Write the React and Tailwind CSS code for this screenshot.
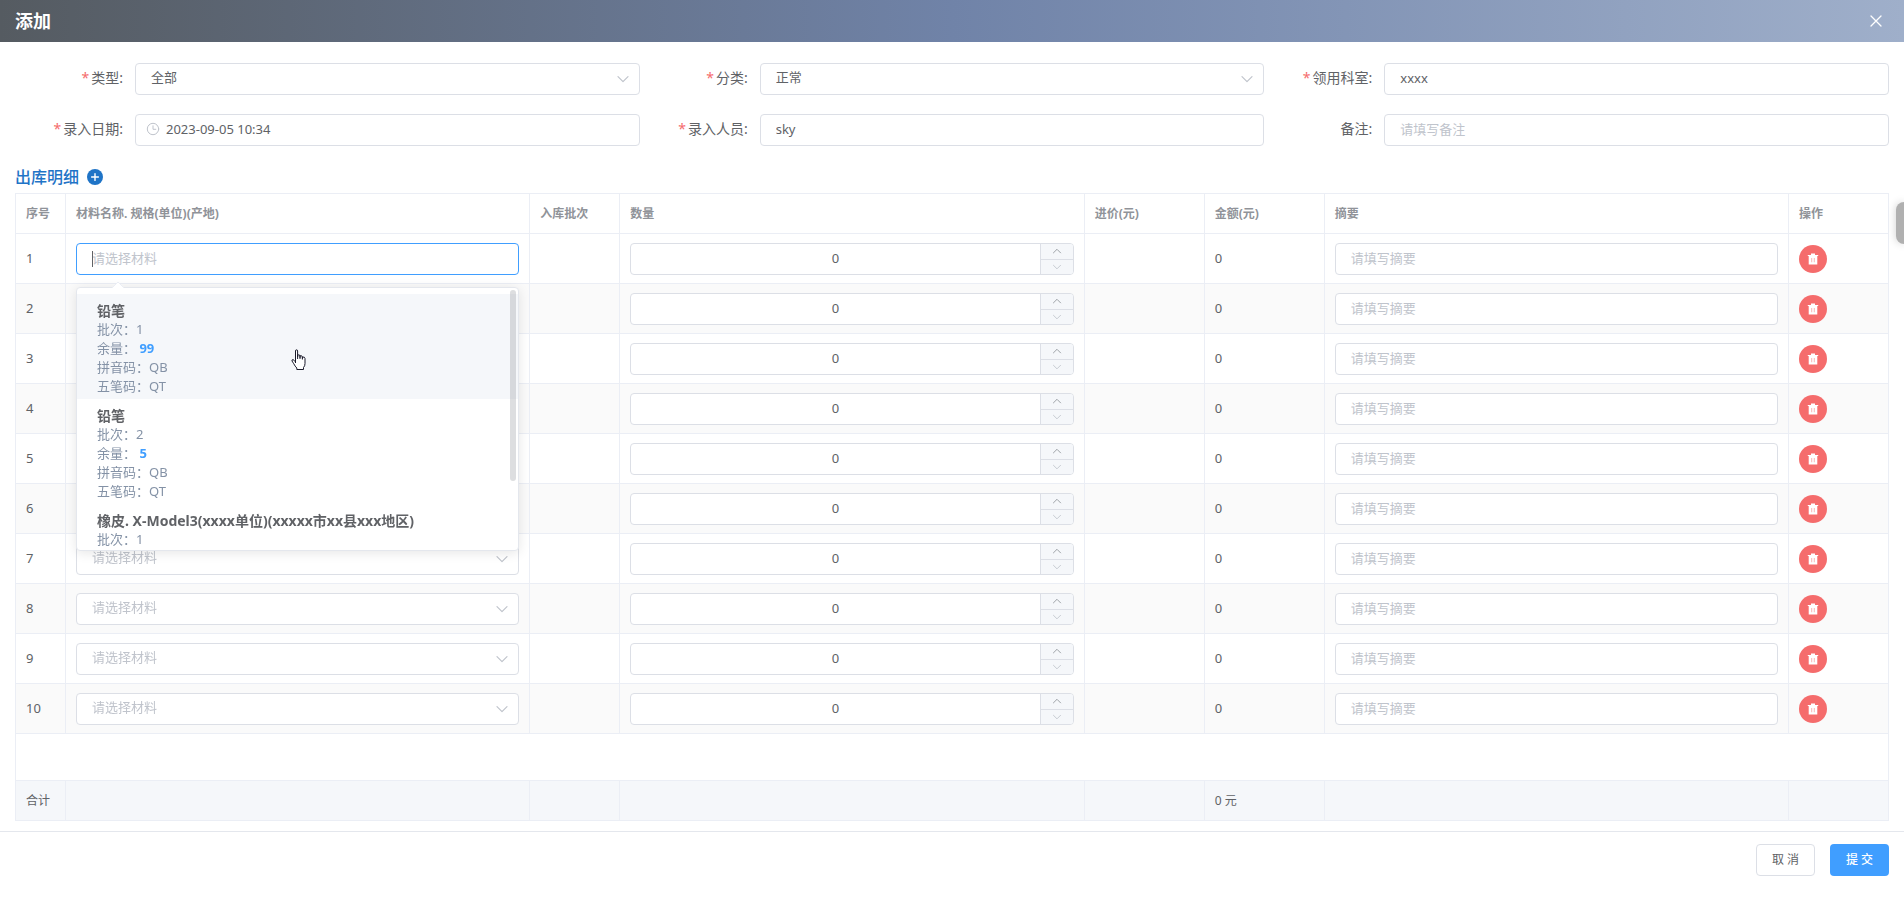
import React, { useState } from 'react';

const LABEL = 'w-[120px] shrink-0 pb-0.5 pr-3 text-right text-sm text-[#606266]';
const INPUT =
  'h-8 w-full rounded border border-[#dcdfe6] bg-white px-[15px] pb-0.5 text-[13px] text-[#606266] placeholder:text-[#c0c4cc] outline-none focus:border-[#409eff]';

const materials = [
  { name: '铅笔', batch: 1, stock: 99, pinyin: 'QB', wubi: 'QT' },
  { name: '铅笔', batch: 2, stock: 5, pinyin: 'QB', wubi: 'QT' },
  { name: '橡皮. X-Model3(xxxx单位)(xxxxx市xx县xxx地区)', batch: 1 },
];

const columns = [
  { title: '序号', width: 'w-[50px]' },
  { title: '材料名称. 规格(单位)(产地)', width: '' },
  { title: '入库批次', width: 'w-[90px]' },
  { title: '数量', width: '' },
  { title: '进价(元)', width: 'w-[120px]' },
  { title: '金额(元)', width: 'w-[120px]' },
  { title: '摘要', width: '' },
  { title: '操作', width: 'w-[100px]' },
];

const Chevron = ({ className, up }) => (
  <svg viewBox="0 0 14 14" className={className} fill="none" stroke="currentColor" strokeWidth="1.2" strokeLinecap="round" strokeLinejoin="round">
    <path d={up ? 'M2 9.6 L7 4.6 L12 9.6' : 'M2 4.6 L7 9.6 L12 4.6'} />
  </svg>
);

const ClockIcon = () => (
  <svg viewBox="0 0 14 14" className="w-3.5 h-3.5" fill="none" stroke="currentColor" strokeLinecap="round">
    <circle cx="7" cy="7" r="5.7" />
    <path d="M7 3.8 V7.3 H9.8" />
  </svg>
);

const TrashIcon = () => (
  <svg viewBox="0 0 12 12" className="w-3 h-3" fill="currentColor" fillRule="evenodd">
    <path d="M4 0.5 H8 V2 H11.2 V3 H0.8 V2 H4 Z M1.7 3 H10.3 V11.5 H1.7 Z M4.6 5 V9.3 H5.1 V5 Z M6.9 5 V9.3 H7.4 V5 Z" />
  </svg>
);

const PlusIcon = () => (
  <svg viewBox="0 0 16 16" className="w-4 h-4">
    <circle cx="8" cy="8" r="8" fill="currentColor" />
    <path d="M8 4.6 V11.4 M4.6 8 H11.4" stroke="#fff" strokeWidth="1.4" strokeLinecap="round" />
  </svg>
);

const HandCursor = () => (
  <svg viewBox="0 0 16 22" className="w-4 h-[22px]" fill="#fff" stroke="#1a1a2a" strokeLinejoin="round">
    <path d="M4.5 14 V2 Q4.5 0.8 5.5 0.8 Q6.6 0.8 6.6 2 V8 V6 Q8.9 5.3 9 7 V8.5 V6.8 Q11.2 6.2 11.4 8 V9.3 V8 Q13.8 7.6 14 9.5 V14.5 Q14 17 12.5 18.5 V20.5 H5.8 V19 Q4 17.3 2.8 14.8 L1 12 Q0.6 10.6 2 10.6 Q3 10.8 4.5 13 Z" />
    <path d="M6.6 7 V10 M9 8 V10 M11.4 9 V10.5" fill="none" />
  </svg>
);

const Field = ({ id, label, required, children }) => (
  <div className="flex items-center">
    <label htmlFor={id} className={LABEL}>
      {required && <span className="mr-0.5 text-[#f56c6c]">*</span>}
      {label}:
    </label>
    <div className="relative flex-1">{children}</div>
  </div>
);

const SelectBox = ({ id, label, options, placeholder }) => (
  <div className="relative">
    <select
      id={id}
      aria-label={label}
      defaultValue={placeholder ? '' : options[0]}
      className={`${INPUT} appearance-none block ${placeholder ? 'text-[#c0c4cc]' : ''}`}
    >
      {placeholder && <option value="">{placeholder}</option>}
      {options.map((o, i) => (
        <option key={i}>{o}</option>
      ))}
    </select>
    <Chevron className="absolute right-2.5 top-[9px] w-3.5 h-3.5 text-[#c0c4cc] pointer-events-none" />
  </div>
);

const MaterialDropdown = () => (
  <div className="absolute left-0 right-0 top-11 z-20 rounded border border-[#e4e7ed] bg-white shadow-[0_2px_12px_rgba(0,0,0,0.1)]">
    <svg viewBox="0 0 12 6" className="absolute left-[35px] -top-1.5 w-3 h-1.5">
      <path d="M0 6 L6 0 L12 6" fill="#fff" stroke="#ebeef5" />
    </svg>
    <ul role="listbox" className="h-[262px] overflow-hidden pt-1.5">
      {materials.map((m, i) => (
        <li key={i} role="option" aria-selected={i === 0} className={`px-5 pb-[3px] pt-[7px] text-[13px] leading-[19px] text-[#8492a6] ${i === 0 ? 'bg-[#f5f7fa]' : ''}`}>
          <div className="text-sm leading-[19px] font-bold text-[#606266] whitespace-nowrap">{m.name}</div>
          <div>批次：{m.batch}</div>
          {m.stock && <div>余量： <b className="text-[#409eff]">{m.stock}</b></div>}
          {m.pinyin && <div>拼音码：{m.pinyin}</div>}
          {m.wubi && <div>五笔码：{m.wubi}</div>}
        </li>
      ))}
    </ul>
    <div className="absolute right-0.5 top-0.5 h-[191px] w-1.5 rounded-full bg-[#909399]/30" />
    <div className="absolute left-[214px] top-[61px]">
      <HandCursor />
    </div>
  </div>
);

const Quantity = ({ row }) => {
  const [value, setValue] = useState(0);
  return (
    <div className="flex h-8 overflow-hidden rounded border border-[#dcdfe6] bg-white">
      <input
        aria-label={`数量 ${row}`}
        value={value}
        onChange={(e) => setValue(Number(e.target.value) || 0)}
        className="min-w-0 flex-1 text-center text-[13px] text-[#606266] outline-none"
      />
      <div className="flex w-[33px] flex-col border-l border-[#dcdfe6] bg-[#f5f7fa]">
        <button aria-label="增加" onClick={() => setValue(value + 1)} className="flex h-4 items-center justify-center border-b border-[#dcdfe6] text-[#909399]">
          <Chevron up className="w-2.5 h-2.5" />
        </button>
        <button aria-label="减少" onClick={() => setValue(Math.max(0, value - 1))} className="flex flex-1 items-center justify-center text-[#c0c4cc]">
          <Chevron className="w-2.5 h-2.5" />
        </button>
      </div>
    </div>
  );
};

const DetailTable = () => {
  const rows = Array.from({ length: 10 }, (_, i) => i + 1);
  const cell = 'border-r border-b border-[#ebeef5] px-2.5 text-left';

  return (
    <table className="w-full table-fixed border-separate border-spacing-0 border-l border-t border-[#ebeef5] text-xs text-[#606266]">
      <thead>
        <tr className="h-10 text-[#909399]">
          {columns.map((c) => (
            <th key={c.title} className={`${cell} ${c.width} font-bold`}>{c.title}</th>
          ))}
        </tr>
      </thead>
      <tbody>
        {rows.map((n) => (
          <tr key={n} className="h-[50px] even:bg-[#fafafa]">
            <td className={`${cell} text-[13px]`}>{n}</td>
            <td className={cell}>
              {n === 1 ? (
                <div className="relative">
                  <input autoFocus aria-label="材料 1" placeholder="请选择材料" className={`${INPUT} block caret-transparent`} />
                  <span className="absolute left-4 top-2 h-4 w-px bg-[#606266]" />
                  <MaterialDropdown />
                </div>
              ) : (
                <SelectBox label={`材料 ${n}`} placeholder="请选择材料" options={materials.map((m) => m.name)} />
              )}
            </td>
            <td className={cell}></td>
            <td className={cell}><Quantity row={n} /></td>
            <td className={cell}></td>
            <td className={`${cell} text-[13px]`}>0</td>
            <td className={cell}>
              <input aria-label={`摘要 ${n}`} placeholder="请填写摘要" className={`${INPUT} block`} />
            </td>
            <td className={cell}>
              <button aria-label="删除" className="flex h-7 w-7 items-center justify-center rounded-full bg-[#f56c6c] text-white">
                <TrashIcon />
              </button>
            </td>
          </tr>
        ))}
        <tr className="h-[47px]">
          <td colSpan={8} className={cell}></td>
        </tr>
      </tbody>
      <tfoot>
        <tr className="h-10 bg-[#f5f7fa]">
          {columns.map((c, i) => (
            <td key={c.title} className={cell}>{i === 0 ? '合计' : i === 5 ? '0 元' : ''}</td>
          ))}
        </tr>
      </tfoot>
    </table>
  );
};

const App = () => {
  return (
    <div className="relative min-h-screen overflow-hidden bg-white font-['Noto_Sans','Noto_Sans_CJK_SC',sans-serif]">
      <header className="flex h-[42px] items-center justify-between bg-linear-to-r from-[#555b61] via-[#7083a8] to-[#9fafca] px-[15px] text-white">
        <h1 className="text-lg font-bold">添加</h1>
        <button aria-label="关闭" className="mr-[5px]">
          <svg viewBox="0 0 16 16" className="w-4 h-4" stroke="currentColor" strokeWidth="1.3" strokeLinecap="round">
            <path d="M3 3 L13 13 M13 3 L3 13" />
          </svg>
        </button>
      </header>

      <main className="px-[15px] pb-2.5 pt-[21px]">
        <div className="grid grid-cols-3 gap-y-[19px]">
          <Field id="type" label="类型" required>
            <SelectBox id="type" options={['全部']} />
          </Field>
          <Field id="category" label="分类" required>
            <SelectBox id="category" options={['正常']} />
          </Field>
          <Field id="dept" label="领用科室" required>
            <input id="dept" defaultValue="xxxx" className={`${INPUT} block`} />
          </Field>
          <Field id="date" label="录入日期" required>
            <span className="absolute left-[11px] top-2 text-[#c0c4cc]"><ClockIcon /></span>
            <input id="date" defaultValue="2023-09-05 10:34" className={`${INPUT} block !pl-[30px]`} />
          </Field>
          <Field id="operator" label="录入人员" required>
            <input id="operator" defaultValue="sky" className={`${INPUT} block`} />
          </Field>
          <Field id="remark" label="备注">
            <input id="remark" placeholder="请填写备注" className={`${INPUT} block`} />
          </Field>
        </div>

        <div className="mb-1 mt-[19px] flex h-6 items-center gap-2 text-[#1f74c7]">
          <h2 className="text-base font-medium">出库明细</h2>
          <button aria-label="新增明细"><PlusIcon /></button>
        </div>

        <DetailTable />
      </main>

      <footer className="flex justify-end gap-[15px] border-t border-[#e4e7ed] px-[15px] py-3 text-xs">
        <button className="h-8 w-[59px] rounded-sm border border-[#dcdfe6] bg-white text-[#606266]">取 消</button>
        <button className="h-8 w-[59px] rounded-sm bg-[#409eff] text-white font-medium">提 交</button>
      </footer>

      <div className="absolute right-0 top-[202px] h-[42px] w-2 rounded-l-lg bg-[#b0b0b0] shadow-[0_0_8px_rgba(0,0,0,0.2)]" />
    </div>
  );
};

export default App;
